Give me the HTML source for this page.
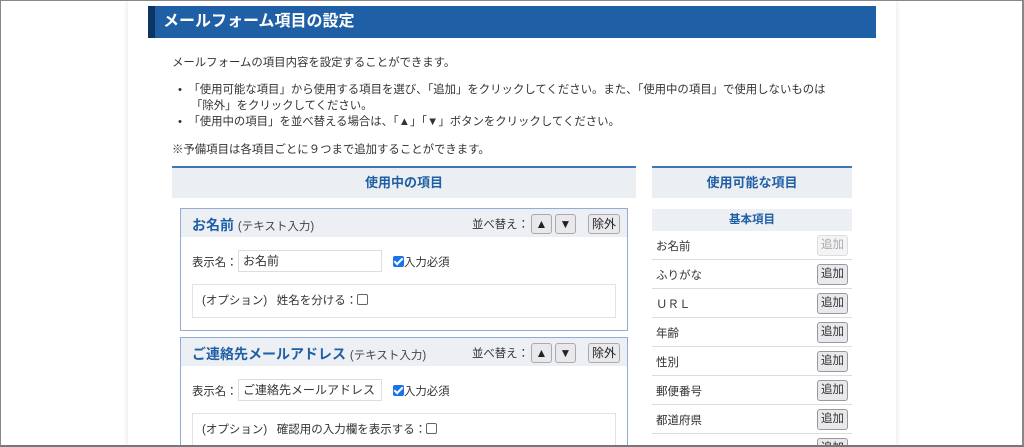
<!DOCTYPE html>
<html style="width:1024px;height:447px;overflow:hidden"><head><meta charset="utf-8"><style>
*{box-sizing:border-box;margin:0;padding:0}
body{width:1024px;height:447px;overflow:hidden;background:#fff;font-family:"Liberation Sans","Noto Sans CJK JP",sans-serif;font-size:11.5px;color:#333;position:relative}
.frame{position:absolute;left:0;top:0;width:1024px;height:447px;border:1px solid #888;border-bottom:2px solid #777;border-right:2px solid #888;z-index:10;pointer-events:none}
.panel{position:absolute;left:128px;top:0;width:768px;height:447px;background:#fff;box-shadow:-2px 0 4px rgba(0,0,0,.06),2px 0 4px rgba(0,0,0,.06)}
.abs{position:absolute}
.title{left:148px;top:6px;width:728px;height:32px;background:#1f5fa6;border-left:7px solid #0d3563;color:#fff;font-weight:bold;font-size:16px;line-height:32px;padding-left:8px}
.t{position:absolute;white-space:nowrap;font-size:11.4px}
.hd{position:absolute;top:166px;height:32px;background:#eceff2;border-top:2px solid #3a76b8;color:#1f5fa6;font-weight:bold;font-size:13px;text-align:center;line-height:30px}
.card{position:absolute;left:180px;width:448px;border:1px solid #93add0;background:#fff;overflow:hidden}
.ch{height:28px;background:#eceff3;position:relative}
.ch .nm{position:absolute;left:11px;top:6px;color:#1f5fa6;font-weight:bold;font-size:14px}
.ch .nm span{color:#444;font-weight:normal;font-size:11.5px}
.btn{position:absolute;height:20px;border:1px solid #aaa;border-radius:3px;background:#e9e9ed;font-size:12px;text-align:center;line-height:18px;color:#222}
.inp{position:absolute;height:22px;border:1px solid #ddd;padding-left:4px;line-height:20px;font-size:12px;overflow:hidden;white-space:nowrap}
.cb{position:absolute;width:11px;height:11px;border-radius:2px;background:#1a73e8}
.cb:after{content:"";position:absolute;left:3px;top:0px;width:3px;height:7px;border:solid #fff;border-width:0 2px 2px 0;transform:rotate(45deg)}
.ecb{display:inline-block;width:11px;height:11px;border:1px solid #666;border-radius:2px;vertical-align:-1px}
.opt{position:absolute;left:11px;width:424px;height:34px;border:1px solid #e2e2e2;line-height:32px;padding-left:9px;font-size:11.5px}
.row{position:absolute;left:652px;width:200px;height:29px;border-bottom:1px solid #ddd}
.row .l{position:absolute;left:4px;top:7px}
.row .b{position:absolute;left:165px;top:4px;width:31px;height:21px;border:1px solid #999;border-radius:3px;background:#e9e9ed;text-align:center;line-height:19px}
</style></head><body>
<div class="frame"></div>
<div class="panel"></div>
<div class="abs title">メールフォーム項目の設定</div>
<div class="t" style="left:172px;top:54px">メールフォームの項目内容を設定することができます。</div>
<div class="t" style="left:178px;top:81px">•&nbsp;&nbsp;「使用可能な項目」から使用する項目を選び、「追加」をクリックしてください。また、「使用中の項目」で使用しないものは</div>
<div class="t" style="left:191px;top:97px">「除外」をクリックしてください。</div>
<div class="t" style="left:178px;top:113px">•&nbsp;&nbsp;「使用中の項目」を並べ替える場合は、「▲」「▼」ボタンをクリックしてください。</div>
<div class="t" style="left:172px;top:141px">※予備項目は各項目ごとに９つまで追加することができます。</div>
<div class="hd" style="left:172px;width:464px">使用中の項目</div>
<div class="hd" style="left:652px;width:200px">使用可能な項目</div>

<div class="card" style="top:208px;height:123px">
<div class="ch"><div class="nm">お名前 <span>(テキスト入力)</span></div>
<div class="t" style="left:291px;top:7px">並べ替え：</div>
<div class="btn" style="left:350px;top:5px;width:21px">▲</div>
<div class="btn" style="left:374px;top:5px;width:21px">▼</div>
<div class="btn" style="left:407px;top:5px;width:32px">除外</div></div>
<div class="t" style="left:11px;top:45px">表示名：</div>
<div class="inp" style="left:57px;top:41px;width:144px">お名前</div>
<div class="cb" style="left:212px;top:47px"></div><div class="t" style="left:223px;top:45px">入力必須</div>
<div class="opt" style="top:75px">(オプション)&nbsp;&nbsp; 姓名を分ける：<span class="ecb"></span></div>
</div>

<div class="card" style="top:337px;height:130px">
<div class="ch"><div class="nm">ご連絡先メールアドレス <span>(テキスト入力)</span></div>
<div class="t" style="left:291px;top:7px">並べ替え：</div>
<div class="btn" style="left:350px;top:5px;width:21px">▲</div>
<div class="btn" style="left:374px;top:5px;width:21px">▼</div>
<div class="btn" style="left:407px;top:5px;width:32px">除外</div></div>
<div class="t" style="left:11px;top:45px">表示名：</div>
<div class="inp" style="left:57px;top:41px;width:144px">ご連絡先メールアドレス</div>
<div class="cb" style="left:212px;top:47px"></div><div class="t" style="left:223px;top:45px">入力必須</div>
<div class="opt" style="top:75px">(オプション)&nbsp;&nbsp; 確認用の入力欄を表示する：<span class="ecb"></span></div>
</div>

<div class="abs" style="left:652px;top:209px;width:200px;height:22px;background:#eceff3;color:#1f5fa6;font-weight:bold;text-align:center;line-height:22px">基本項目</div>
<div class="row" style="top:231px"><div class="l">お名前</div><div class="b" style="color:#aaa;border-color:#ddd;background:#f4f4f6">追加</div></div>
<div class="row" style="top:260px"><div class="l">ふりがな</div><div class="b">追加</div></div>
<div class="row" style="top:289px"><div class="l">ＵＲＬ</div><div class="b">追加</div></div>
<div class="row" style="top:318px"><div class="l">年齢</div><div class="b">追加</div></div>
<div class="row" style="top:347px"><div class="l">性別</div><div class="b">追加</div></div>
<div class="row" style="top:376px"><div class="l">郵便番号</div><div class="b">追加</div></div>
<div class="row" style="top:405px"><div class="l">都道府県</div><div class="b">追加</div></div>
<div class="row" style="top:434px"><div class="l"></div><div class="b">追加</div></div>
</body></html>
